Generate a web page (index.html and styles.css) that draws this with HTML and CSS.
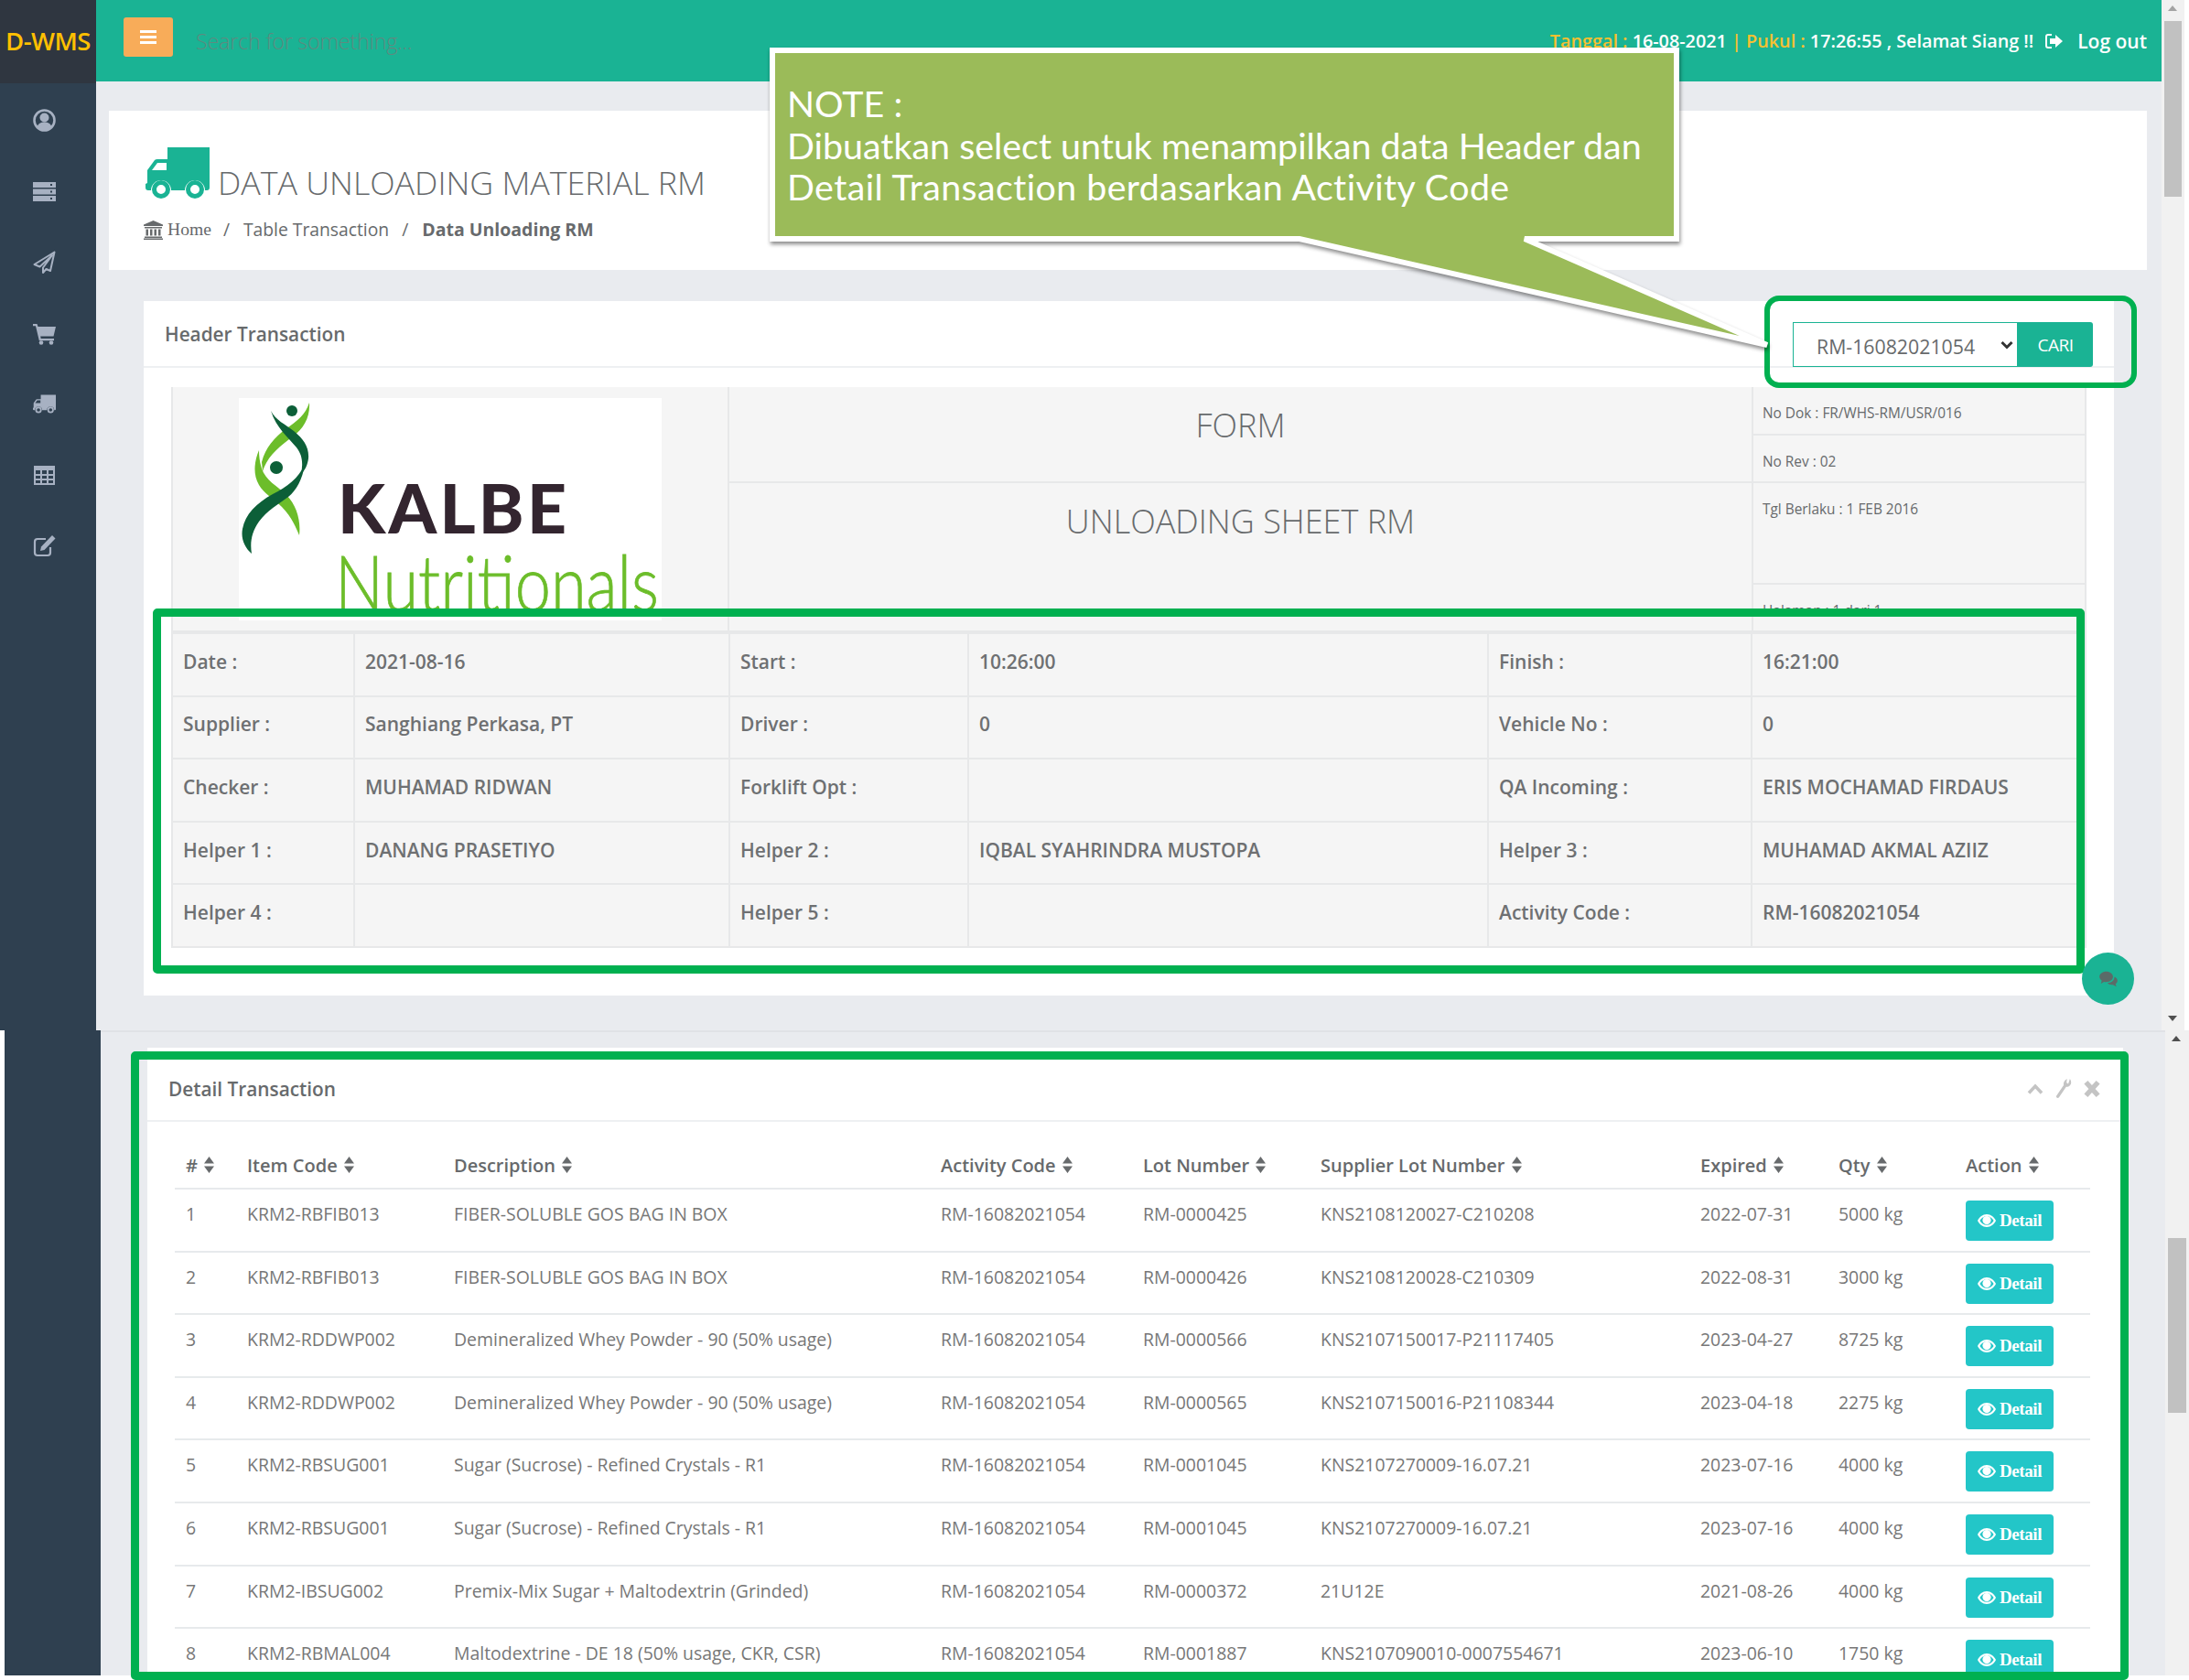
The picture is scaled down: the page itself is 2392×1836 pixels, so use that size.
FILE: index.html
```html
<!DOCTYPE html>
<html lang="id">
<head>
<meta charset="utf-8">
<title>Data Unloading Material RM</title>
<link rel="stylesheet" href="styles.css">
</head>
<body>
<svg class="defs" width="0" height="0" aria-hidden="true">
  <symbol id="i-truck" viewBox="0 0 70 56">
    <path fill-rule="evenodd" d="M24 0H70V44a3 3 0 0 1-3 3H65a11 11 0 0 0-22 0H28a11 11 0 0 0-22 0H3a3 3 0 0 1-3-3V40l2-1V25L10 14Q11 13 13 13H24Z M13 17L7 25H23V17Z"/>
    <circle cx="17" cy="46" r="7.5" fill="none" stroke="currentColor" stroke-width="5"/>
    <circle cx="54" cy="46" r="7.5" fill="none" stroke="currentColor" stroke-width="5"/>
  </symbol>
  <symbol id="i-sort" viewBox="0 0 11 18">
    <path d="M5.5 0L11 7.5H0Z M0 10.5H11L5.5 18Z"/>
  </symbol>
  <symbol id="i-eye" viewBox="0 0 20 16">
    <path fill-rule="evenodd" d="M10 1C5.500 1 2 4 0 8c2 4 5.500 7 10 7s8-3 10-7c-2-4-5.500-7-10-7Zm0 2.200c3.300 0 5.800 1.900 7.600 4.800-1.800 2.900-4.300 4.800-7.600 4.800S4.200 10.900 2.400 8C4.200 5.100 6.700 3.200 10 3.200Z"/>
    <circle cx="10" cy="7.600" r="4.600"/>
  </symbol>
</svg>

<div class="screen screen-top">
  <aside class="sidebar">
    <div class="brand">D-WMS</div>
    <nav class="side-nav">
      <svg class="side-icon" viewBox="0 0 25 25"><circle cx="12.500" cy="12.500" r="11" fill="none" stroke="currentColor" stroke-width="2.600"/><circle cx="12.500" cy="9.500" r="5"/><path d="M4.500 20c1-4 4-5.500 8-5.500s7 1.500 8 5.500c-2 2.500-5 3.500-8 3.500s-6-1-8-3.500Z"/></svg>
      <svg class="side-icon" viewBox="0 0 25 25"><path fill-rule="evenodd" d="M0 2h25v6H0Zm19 2v2h2V4ZM0 9.500h25v6H0Zm19 2v2h2v-2ZM0 17h25v6H0Zm19 2v2h2v-2Z"/></svg>
      <svg class="side-icon" viewBox="0 0 25 25"><path fill="none" stroke="currentColor" stroke-width="2" stroke-linejoin="round" d="M23.500 1.500L1.500 15l6 2.500L21 5 11 18.500V24l3.500-4 4.500 2Z"/></svg>
      <svg class="side-icon" viewBox="0 0 25 25"><path d="M0 2h4.500l1 3H25l-2.500 10.500H8.200l.5 2.500H23v2.200H6.800L3 4.300H0Z"/><circle cx="9" cy="22.500" r="2.300"/><circle cx="20" cy="22.500" r="2.300"/></svg>
      <svg class="side-icon"><use href="#i-truck"/></svg>
      <svg class="side-icon" viewBox="0 0 25 25"><path fill-rule="evenodd" d="M1 2h23v21H1Zm2 5v4h5V7Zm7 0v4h5V7Zm7 0v4h5V7ZM3 13v3h5v-3Zm7 0v3h5v-3Zm7 0v3h5v-3ZM3 18v3h5v-3Zm7 0v3h5v-3Zm7 0v3h5v-3Z"/></svg>
      <svg class="side-icon" viewBox="0 0 25 25"><path fill="none" stroke="currentColor" stroke-width="2.200" d="M19 14v6a3 3 0 0 1-3 3H5a3 3 0 0 1-3-3V8a3 3 0 0 1 3-3h9"/><path d="M21 1l3.500 3.500-12 12.500L8 18l1-4.500Z"/></svg>
    </nav>
  </aside>

  <main class="main">
    <header class="topbar">
      <button class="menu-btn" type="button" aria-label="Menu"><span></span><span></span><span></span></button>
      <span class="search">Search for something...</span>
      <div class="clock">
        <b class="amber">Tanggal :</b> <b>16-08-2021</b> <b class="amber">| Pukul :</b> <b>17:26:55 , Selamat Siang !!</b>
      </div>
      <svg class="logout-icon" viewBox="0 0 20 18"><path fill="none" stroke="currentColor" stroke-width="2" d="M7 2H3a2 2 0 0 0-2 2v10a2 2 0 0 0 2 2h4"/><path d="M11 2l8 7-8 7v-4H5V6h6Z"/></svg>
      <span class="logout">Log out</span>
    </header>

    <section class="page-title">
      <div class="title-row">
        <svg class="title-truck"><use href="#i-truck"/></svg>
        <h1>DATA UNLOADING MATERIAL RM</h1>
      </div>
      <div class="crumbs">
        <svg class="bank" viewBox="0 0 21 21"><path d="M10.500 0L21 4.500V6H0V4.500ZM1 7h19v1.500H1ZM2.500 9.500h2.500v7H2.500Zm4.500 0h2.500v7H7Zm4.500 0H14v7h-2.500Zm4.500 0h2.500v7H16ZM1 17.500h19V19H1ZM0 19.500h21V21H0Z"/></svg>
        <span class="home">Home</span>
        <span class="sep sep-first">/</span>
        <span>Table Transaction</span>
        <span class="sep">/</span>
        <strong>Data Unloading RM</strong>
      </div>
    </section>

    <section class="card header-card">
      <div class="card-head">
        <h2>Header Transaction</h2>
        <form class="picker">
          <div class="picker-field">
            <select class="picker-select"><option>RM-16082021054</option></select>
            <svg class="picker-chevron" viewBox="0 0 14 10"><path fill="none" stroke="currentColor" stroke-width="3" d="M1.500 2L7 7.500 12.500 2"/></svg>
          </div>
          <button class="picker-btn" type="button">CARI</button>
        </form>
      </div>
      <div class="card-body">
        <table class="form-table">
          <tr class="r-a">
            <td class="logo-cell" rowspan="4">
              <svg class="logo" viewBox="0 0 462 243">
                <g transform="translate(-261 -435)">
                  <path fill="#6cbd2a" d="M338 440c1 16-6 28-18 37-15 11-28 22-33 38l-1-10c4-16 14-27 26-36 13-9 22-16 26-29Z"/>
                  <path fill="#6cbd2a" d="M283 492c-5 12-7 26 0 38 5 9 16 15 25 24 11 11 16 24 19 31 2-16-3-33-14-44-10-10-23-16-27-29-2-6-3-13-3-20Z"/>
                  <path fill="#0c5f38" d="M296 449c5 10 16 15 25 22 11 9 17 18 16 30-1 8-4 13-8 17 2-11 2-20-5-29-9-11-22-21-28-40Z"/>
                  <path fill="#0c5f38" d="M333 507c-6 15-19 25-35 33-18 10-30 22-33 38-2 10 2 20 10 27-2-12 0-24 8-35 9-12 21-19 32-27 9-7 16-20 18-36Z"/>
                  <circle fill="#0c5f38" cx="319" cy="449" r="6"/>
                  <circle fill="#0c5f38" cx="302" cy="511" r="7"/>
                </g>
                <text class="logo-kalbe" x="108" y="148" textLength="250" lengthAdjust="spacing">KALBE</text>
                <text class="logo-nutri" x="105" y="233" textLength="354" lengthAdjust="spacingAndGlyphs">Nutritionals</text>
              </svg>
            </td>
            <td class="form-title" rowspan="2"><span>FORM</span></td>
            <td class="form-meta">No Dok : FR/WHS-RM/USR/016</td>
          </tr>
          <tr class="r-a"><td class="form-meta">No Rev : 02</td></tr>
          <tr class="r-b">
            <td class="form-title" rowspan="2"><span>UNLOADING SHEET RM</span></td>
            <td class="form-meta">Tgl Berlaku : 1 FEB 2016</td>
          </tr>
          <tr class="r-a"><td class="form-meta">Halaman : 1 dari 1</td></tr>
        </table>
        <table class="info-table">
          <tr><th>Date :</th><td>2021-08-16</td><th>Start :</th><td>10:26:00</td><th>Finish :</th><td>16:21:00</td></tr>
          <tr><th>Supplier :</th><td>Sanghiang Perkasa, PT</td><th>Driver :</th><td>0</td><th>Vehicle No :</th><td>0</td></tr>
          <tr><th>Checker :</th><td>MUHAMAD RIDWAN</td><th>Forklift Opt :</th><td></td><th>QA Incoming :</th><td>ERIS MOCHAMAD FIRDAUS</td></tr>
          <tr><th>Helper 1 :</th><td>DANANG PRASETIYO</td><th>Helper 2 :</th><td>IQBAL SYAHRINDRA MUSTOPA</td><th>Helper 3 :</th><td>MUHAMAD AKMAL AZIIZ</td></tr>
          <tr><th>Helper 4 :</th><td></td><th>Helper 5 :</th><td></td><th>Activity Code :</th><td>RM-16082021054</td></tr>
        </table>
      </div>
    </section>
  </main>

  <div class="scrollbar">
    <i class="arrow up pale"></i>
    <i class="thumb"></i>
    <i class="arrow down"></i>
  </div>
</div>

<div class="screen screen-bottom">
  <aside class="sidebar"></aside>
  <main class="main">
    <section class="card detail-card">
      <div class="card-head">
        <h2>Detail Transaction</h2>
        <div class="tools">
          <svg viewBox="0 0 18 12"><path fill="none" stroke="currentColor" stroke-width="3.500" d="M2 10.500L9 3l7 7.500"/></svg>
          <svg viewBox="0 0 19 24"><path d="M17 0c2 3 2 6 0 8-1.500 1.500-3 1.800-4.500 1.600L4 22c-1 1.800-4 .5-3.200-1.500L9.500 7.500C9 5 10 2 13.500 0L13 4.500l2 1.500Z"/></svg>
          <svg viewBox="0 0 15 16"><path fill="none" stroke="currentColor" stroke-width="4.500" d="M2 2l11 12M13 2L2 14"/></svg>
        </div>
      </div>
      <div class="card-body">
        <table class="detail-table">
          <thead>
            <tr>
              <th class="c1"># <svg class="sort"><use href="#i-sort"/></svg></th>
              <th class="c2">Item Code <svg class="sort"><use href="#i-sort"/></svg></th>
              <th class="c3">Description <svg class="sort"><use href="#i-sort"/></svg></th>
              <th class="c4">Activity Code <svg class="sort"><use href="#i-sort"/></svg></th>
              <th class="c5">Lot Number <svg class="sort"><use href="#i-sort"/></svg></th>
              <th class="c6">Supplier Lot Number <svg class="sort"><use href="#i-sort"/></svg></th>
              <th class="c7">Expired <svg class="sort"><use href="#i-sort"/></svg></th>
              <th class="c8">Qty <svg class="sort"><use href="#i-sort"/></svg></th>
              <th class="c9">Action <svg class="sort"><use href="#i-sort"/></svg></th>
            </tr>
          </thead>
          <tbody>
            <tr><td>1</td><td>KRM2-RBFIB013</td><td>FIBER-SOLUBLE GOS BAG IN BOX</td><td>RM-16082021054</td><td>RM-0000425</td><td>KNS2108120027-C210208</td><td>2022-07-31</td><td>5000 kg</td><td><button class="detail-btn" type="button"><svg><use href="#i-eye"/></svg>Detail</button></td></tr>
            <tr><td>2</td><td>KRM2-RBFIB013</td><td>FIBER-SOLUBLE GOS BAG IN BOX</td><td>RM-16082021054</td><td>RM-0000426</td><td>KNS2108120028-C210309</td><td>2022-08-31</td><td>3000 kg</td><td><button class="detail-btn" type="button"><svg><use href="#i-eye"/></svg>Detail</button></td></tr>
            <tr><td>3</td><td>KRM2-RDDWP002</td><td>Demineralized Whey Powder - 90 (50% usage)</td><td>RM-16082021054</td><td>RM-0000566</td><td>KNS2107150017-P21117405</td><td>2023-04-27</td><td>8725 kg</td><td><button class="detail-btn" type="button"><svg><use href="#i-eye"/></svg>Detail</button></td></tr>
            <tr><td>4</td><td>KRM2-RDDWP002</td><td>Demineralized Whey Powder - 90 (50% usage)</td><td>RM-16082021054</td><td>RM-0000565</td><td>KNS2107150016-P21108344</td><td>2023-04-18</td><td>2275 kg</td><td><button class="detail-btn" type="button"><svg><use href="#i-eye"/></svg>Detail</button></td></tr>
            <tr><td>5</td><td>KRM2-RBSUG001</td><td>Sugar (Sucrose) - Refined Crystals - R1</td><td>RM-16082021054</td><td>RM-0001045</td><td>KNS2107270009-16.07.21</td><td>2023-07-16</td><td>4000 kg</td><td><button class="detail-btn" type="button"><svg><use href="#i-eye"/></svg>Detail</button></td></tr>
            <tr><td>6</td><td>KRM2-RBSUG001</td><td>Sugar (Sucrose) - Refined Crystals - R1</td><td>RM-16082021054</td><td>RM-0001045</td><td>KNS2107270009-16.07.21</td><td>2023-07-16</td><td>4000 kg</td><td><button class="detail-btn" type="button"><svg><use href="#i-eye"/></svg>Detail</button></td></tr>
            <tr><td>7</td><td>KRM2-IBSUG002</td><td>Premix-Mix Sugar + Maltodextrin (Grinded)</td><td>RM-16082021054</td><td>RM-0000372</td><td>21U12E</td><td>2021-08-26</td><td>4000 kg</td><td><button class="detail-btn" type="button"><svg><use href="#i-eye"/></svg>Detail</button></td></tr>
            <tr><td>8</td><td>KRM2-RBMAL004</td><td>Maltodextrine - DE 18 (50% usage, CKR, CSR)</td><td>RM-16082021054</td><td>RM-0001887</td><td>KNS2107090010-0007554671</td><td>2023-06-10</td><td>1750 kg</td><td><button class="detail-btn" type="button"><svg><use href="#i-eye"/></svg>Detail</button></td></tr>
          </tbody>
        </table>
      </div>
    </section>
  </main>
  <div class="scrollbar scrollbar-two">
    <i class="arrow up"></i>
    <i class="thumb"></i>
  </div>
</div>

<div class="mark mark-picker"></div>
<div class="mark mark-info"></div>
<div class="mark mark-detail"></div>

<button class="chat-fab" type="button" aria-label="Chat">
  <svg viewBox="0 0 24 22"><path d="M9 1c5 0 9 3 9 7s-4 7-9 7c-1 0-2 0-3-.3L2 17l1-4C1.500 11.700 0 10 0 8c0-4 4-7 9-7Z"/><path d="M20 8c2.500 1 4 3 4 5 0 1.800-1 3.200-2.500 4.300l1 3.700-4.500-2.500c-3 .4-6-.5-7.500-2.300 5 0 9.500-3.200 9.500-8.200Z"/></svg>
</button>

<aside class="callout">
  <svg class="callout-shape" viewBox="0 0 1110 340"><path d="M3 3H991V209H825L1090 325 579 209H3Z"/></svg>
  <p class="callout-text">NOTE :<br>Dibuatkan select untuk menampilkan data Header dan<br><span class="callout-wide">Detail Transaction berdasarkan Activity Code</span></p>
</aside>
</body>
</html>
```

FILE: styles.css
```css
* { box-sizing: border-box; }
html, body { margin: 0; padding: 0; }
body {
  position: relative;
  width: 2392px;
  height: 1836px;
  overflow: hidden;
  background: #fff;
  color: #676a6c;
  font-family: "Open Sans", "Liberation Sans", sans-serif;
  font-size: 19px;
}
.defs { position: absolute; }

/* screens */
.screen { display: flex; }
.screen-top { width: 2387px; height: 1126px; }
.screen-bottom { margin-left: 5px; height: 705px; }
.sidebar { flex: 0 0 105px; background: #2f4050; }
.main { flex: 1; min-width: 0; background: #e9ebef; overflow: hidden; }
.screen-bottom .main { border-top: 2px solid #e0e2e6; }

/* sidebar */
.brand {
  height: 91px;
  background: #2f3640;
  color: #ffc000;
  font-size: 27.500px;
  font-weight: 600;
  line-height: 90px;
  text-align: center;
  letter-spacing: -.5px;
}
.side-nav {
  display: flex;
  flex-direction: column;
  align-items: center;
  gap: 52.500px;
  padding: 28px 8px 0 0;
  color: #a7b1c2;
}
.side-icon { width: 25px; height: 25px; fill: currentColor; color: #a7b1c2; }

/* top bar */
.topbar {
  display: flex;
  align-items: center;
  height: 89px;
  padding: 0 16px 0 30px;
  background: #1ab394;
  color: #fff;
}
.menu-btn {
  display: flex;
  flex-direction: column;
  justify-content: center;
  gap: 3px;
  width: 54px;
  height: 43px;
  margin: 0 25px 8px 0;
  padding: 0 18px;
  border: 0;
  border-radius: 3px;
  background: #f8ac59;
}
.menu-btn span { display: block; height: 3px; background: #fff; }
.search { color: #5e8a80; font-size: 23.300px; font-weight: 300; letter-spacing: -.2px; }
.clock { margin-left: auto; font-size: 19.800px; }
.clock b { font-weight: 600; }
.clock .amber { color: #f8c030; }
.logout-icon { width: 20px; height: 18px; margin: 0 15px 0 13px; fill: currentColor; }
.logout { font-size: 21px; font-weight: 600; }

/* page title */
.page-title {
  height: 174px;
  margin: 32px 16px 0 14px;
  padding: 40px 38px 0;
  background: #fff;
}
.title-row { display: flex; align-items: flex-end; gap: 9px; padding-left: 2px; }
.title-truck { width: 70px; height: 56px; fill: #1ab394; color: #1ab394; }
.title-row h1 {
  margin: 0 0 -5px;
  color: #676a6c;
  font-size: 35.800px;
  font-weight: 300;
  line-height: 46px;
  white-space: nowrap;
}
.crumbs {
  display: flex;
  align-items: center;
  margin-top: 23px;
  font-size: 19.300px;
  line-height: 22px;
}
.bank { width: 21px; height: 21px; margin-right: 5px; fill: #676a6c; }
.home { font-family: "Liberation Serif", serif; font-size: 19.600px; }
.sep { margin: 0 14px; }
.sep-first { margin: 0 15px 0 13px; }
.crumbs strong { margin-left: 1px; font-size: 19.500px; font-weight: 700; }

/* cards */
.card { background: #fff; }
.card-head { display: flex; border-bottom: 2px solid #eef0f2; }
.card-head h2 { margin: 0; color: #676a6c; font-size: 20.800px; font-weight: 600; line-height: 28px; }
.header-card { width: 2153px; height: 759px; margin: 34px 0 0 52px; }
.header-card .card-head { height: 73px; padding: 22px 23px 0; justify-content: space-between; }
.header-card .card-body { padding: 21px 0 0 30px; }
.picker { display: flex; height: 49px; margin-top: 1px; }
.picker-field { position: relative; width: 246px; height: 49px; }
.picker-select {
  appearance: none;
  width: 246px;
  height: 49px;
  padding: 4px 12px 0 25px;
  border: 1px solid #1ab394;
  border-radius: 0;
  background: #fff;
  color: #676a6c;
  font: 400 21.300px "Open Sans", sans-serif;
  outline: 0;
}
.picker-chevron { position: absolute; right: 5px; top: 20px; width: 14px; height: 10px; color: #333; pointer-events: none; }
.picker-btn {
  width: 82px;
  height: 49px;
  border: 0;
  border-radius: 0 3px 3px 0;
  background: #1ab394;
  color: #fff;
  font: 400 19px "Open Sans", sans-serif;
  letter-spacing: -.5px;
}

/* form table */
.form-table, .info-table {
  width: 2091px;
  table-layout: fixed;
  border-collapse: collapse;
  background: #f5f5f5;
}
.form-table td, .info-table th, .info-table td { border: 2px solid #e7e8e9; }
.form-table tr:first-child td { border-top: 0; }
.form-table { height: 267px; }
.r-a { height: 52px; }
.r-b { height: 111px; }
.logo-cell { width: 608px; padding: 0; position: relative; vertical-align: top; }
.logo { display: block; width: 462px; height: 243px; margin: 12px 0 0 72px; background: #fff; overflow: visible; }
.logo-kalbe { fill: #33252f; font: 900 75px "Lato", sans-serif; }
.logo-nutri { fill: #6cbd2a; stroke: #6cbd2a; stroke-width: .8px; font: 300 85px "Lato", sans-serif; }
.form-title { width: 1119px; padding: 0; text-align: center; vertical-align: top; font-size: 36px; font-weight: 300; }
.form-title span { display: block; padding-top: 17px; line-height: 50px; }
.form-meta { width: 364px; padding: 19px 0 0 10px; font-size: 15.400px; vertical-align: top; line-height: 20px; }

/* info table */
.info-table { font-size: 21px; }
.info-table tr { height: 68.6px; }
.info-table th, .info-table td { padding: 0 11px 7px; text-align: left; font-weight: 600; color: #6e7072; }
.info-table th:nth-child(1) { width: 199px; }
.info-table td:nth-child(2) { width: 410px; }
.info-table th:nth-child(3) { width: 261px; }
.info-table td:nth-child(4) { width: 568px; }
.info-table th:nth-child(5) { width: 288px; }
.info-table td:nth-child(6) { width: 365px; }

/* detail */
.detail-card { width: 2159px; height: 700px; margin: 17px 0 0 51px; }
.detail-card .card-head { height: 81px; padding: 31px 25px 0 23px; }
.tools { display: flex; align-items: center; gap: 13px; height: 28px; margin-left: auto; color: #c4c4c4; fill: #c4c4c4; }
.tools svg { width: 18px; height: 22px; }
.detail-card .card-body { padding: 30px 0 0 30px; }
.detail-table { width: 2093px; table-layout: fixed; border-collapse: collapse; font-size: 19.450px; }
.detail-table th {
  height: 43px;
  padding: 0 12px 8px;
  border-bottom: 2px solid #e7eaec;
  text-align: left;
  font-size: 20px;
  font-weight: 600;
  white-space: nowrap;
}
.c1 { width: 67px; } .c2 { width: 226px; } .c3 { width: 532px; } .c4 { width: 221px; } .c5 { width: 194px; }
.c6 { width: 415px; } .c7 { width: 151px; } .c8 { width: 139px; } .c9 { width: 148px; }
.sort { width: 11px; height: 18px; margin-left: 2px; fill: #676a6c; vertical-align: -1px; }
.detail-table tbody tr { height: 68.6px; border-bottom: 2px solid #e7eaec; }
.detail-table td { padding: 13px 12px 0; line-height: 27px; vertical-align: top; white-space: nowrap; color: #777; }
.detail-table td:last-child { padding-top: 12px; }
.detail-btn {
  display: flex;
  align-items: center;
  justify-content: center;
  gap: 4px;
  width: 96px;
  height: 44px;
  padding: 0;
  border: 0;
  border-radius: 4px;
  background: #23c6c8;
  color: #fff;
  font: 700 19px "Liberation Serif", serif;
  letter-spacing: -.4px;
}
.detail-btn svg { width: 20px; height: 16px; fill: #fff; }

/* scrollbars */
.scrollbar { position: relative; flex: 0 0 25px; background: #f1f1f1; }
.scrollbar-two { flex-basis: 26px; }
.thumb { position: absolute; left: 3px; right: 3px; top: 23px; height: 192px; background: #c1c1c1; }
.scrollbar-two .thumb { top: 227px; height: 191px; }
.arrow { position: absolute; left: 7px; width: 0; height: 0; border: 5.500px solid transparent; }
.arrow.up { top: 6px; border-top: 0; border-bottom: 6px solid #505050; }
.arrow.up.pale { border-bottom-color: #a3a3a3; }
.arrow.down { top: 1110px; border-bottom: 0; border-top: 6px solid #505050; }

/* annotations */
.mark { position: absolute; border: 9px solid #00b050; border-radius: 5px; pointer-events: none; }
.mark-picker { left: 1928px; top: 323px; width: 407px; height: 101px; border-width: 6px; border-radius: 16px; }
.mark-info { left: 167px; top: 665px; width: 2111px; height: 399px; }
.mark-detail { left: 143px; top: 1149px; width: 2183px; height: 687px; }

.chat-fab {
  position: absolute;
  left: 2275px;
  top: 1041px;
  display: flex;
  align-items: center;
  justify-content: center;
  width: 57px;
  height: 57px;
  padding: 0;
  border: 0;
  border-radius: 50%;
  background: #1ab394;
}
.chat-fab svg { width: 20px; height: 18px; fill: #5b6b68; }

.callout { position: absolute; left: 841px; top: 52px; width: 1110px; height: 340px; }
.callout-shape {
  position: absolute;
  inset: 0;
  width: 1110px;
  height: 340px;
  fill: #9bbb59;
  stroke: #fff;
  stroke-width: 6;
  stroke-linejoin: miter;
  filter: drop-shadow(1px 3px 2px rgba(0, 0, 0, .45));
}
.callout-text {
  position: relative;
  margin: 0;
  padding: 38px 0 0 19px;
  color: #fff;
  font-family: "Lato", sans-serif;
  font-size: 39.400px;
  line-height: 45.500px;
  white-space: nowrap;
}
.callout-wide { letter-spacing: .4px; }
```
